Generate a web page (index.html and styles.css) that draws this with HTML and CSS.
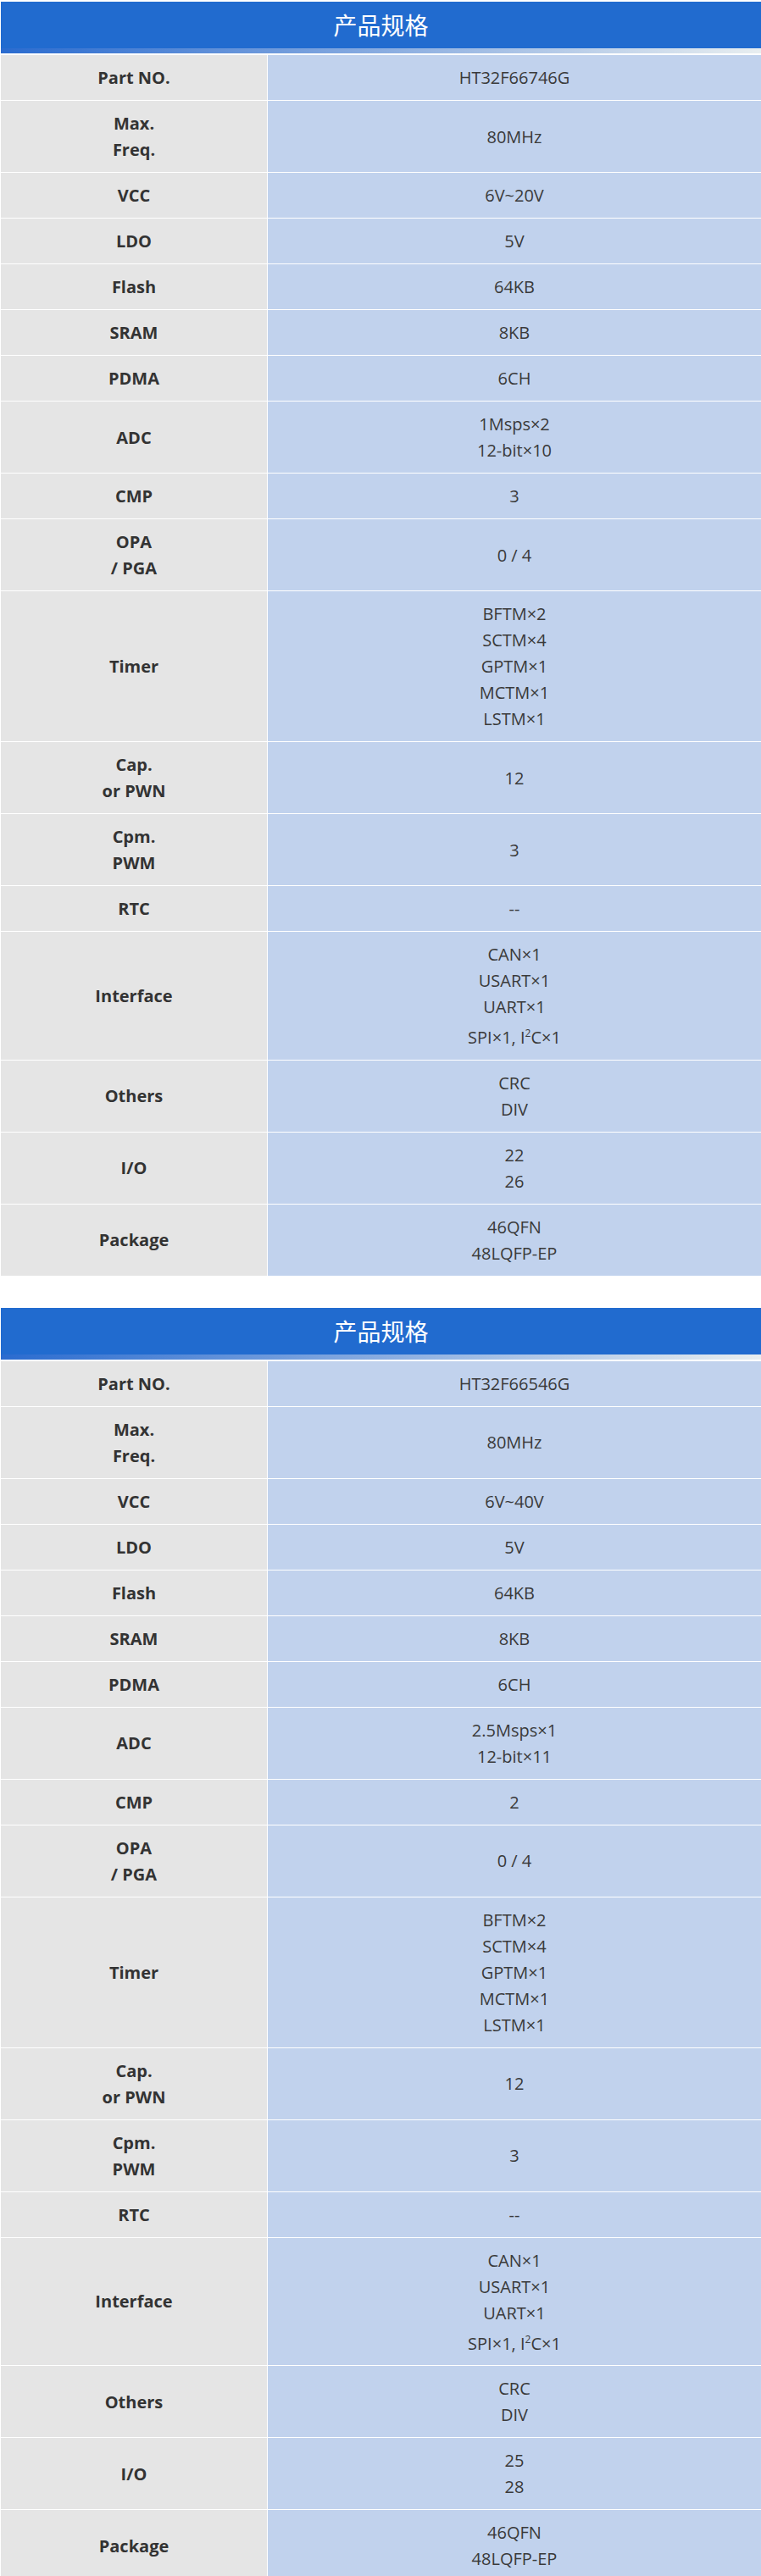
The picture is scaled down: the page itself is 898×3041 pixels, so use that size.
FILE: index.html
```html
<!DOCTYPE html>
<html lang="zh-CN">
<head>
<meta charset="utf-8">
<title>产品规格</title>
<link rel="stylesheet" href="styles.css">
</head>
<body>
<section class="spec">
  <div class="spec-head">产品规格</div>
  <div class="spec-bar"></div>
  <table class="spec-table">
    <tr><td class="label">Part NO.</td><td class="value">HT32F66746G</td></tr>
    <tr><td class="label">Max.<br>Freq.</td><td class="value">80MHz</td></tr>
    <tr><td class="label">VCC</td><td class="value">6V~20V</td></tr>
    <tr><td class="label">LDO</td><td class="value">5V</td></tr>
    <tr><td class="label">Flash</td><td class="value">64KB</td></tr>
    <tr><td class="label">SRAM</td><td class="value">8KB</td></tr>
    <tr><td class="label">PDMA</td><td class="value">6CH</td></tr>
    <tr><td class="label">ADC</td><td class="value">1Msps×2<br>12-bit×10</td></tr>
    <tr><td class="label">CMP</td><td class="value">3</td></tr>
    <tr><td class="label">OPA<br>/ PGA</td><td class="value">0 / 4</td></tr>
    <tr><td class="label">Timer</td><td class="value">BFTM×2<br>SCTM×4<br>GPTM×1<br>MCTM×1<br>LSTM×1</td></tr>
    <tr><td class="label">Cap.<br>or PWN</td><td class="value">12</td></tr>
    <tr><td class="label">Cpm.<br>PWM</td><td class="value">3</td></tr>
    <tr><td class="label">RTC</td><td class="value">--</td></tr>
    <tr><td class="label">Interface</td><td class="value">CAN×1<br>USART×1<br>UART×1<br>SPI×1, I<sup>2</sup>C×1</td></tr>
    <tr><td class="label">Others</td><td class="value">CRC<br>DIV</td></tr>
    <tr><td class="label">I/O</td><td class="value">22<br>26</td></tr>
    <tr><td class="label">Package</td><td class="value">46QFN<br>48LQFP-EP</td></tr>
  </table>
</section>

<section class="spec">
  <div class="spec-head">产品规格</div>
  <div class="spec-bar"></div>
  <table class="spec-table">
    <tr><td class="label">Part NO.</td><td class="value">HT32F66546G</td></tr>
    <tr><td class="label">Max.<br>Freq.</td><td class="value">80MHz</td></tr>
    <tr><td class="label">VCC</td><td class="value">6V~40V</td></tr>
    <tr><td class="label">LDO</td><td class="value">5V</td></tr>
    <tr><td class="label">Flash</td><td class="value">64KB</td></tr>
    <tr><td class="label">SRAM</td><td class="value">8KB</td></tr>
    <tr><td class="label">PDMA</td><td class="value">6CH</td></tr>
    <tr><td class="label">ADC</td><td class="value">2.5Msps×1<br>12-bit×11</td></tr>
    <tr><td class="label">CMP</td><td class="value">2</td></tr>
    <tr><td class="label">OPA<br>/ PGA</td><td class="value">0 / 4</td></tr>
    <tr><td class="label">Timer</td><td class="value">BFTM×2<br>SCTM×4<br>GPTM×1<br>MCTM×1<br>LSTM×1</td></tr>
    <tr><td class="label">Cap.<br>or PWN</td><td class="value">12</td></tr>
    <tr><td class="label">Cpm.<br>PWM</td><td class="value">3</td></tr>
    <tr><td class="label">RTC</td><td class="value">--</td></tr>
    <tr><td class="label">Interface</td><td class="value">CAN×1<br>USART×1<br>UART×1<br>SPI×1, I<sup>2</sup>C×1</td></tr>
    <tr><td class="label">Others</td><td class="value">CRC<br>DIV</td></tr>
    <tr><td class="label">I/O</td><td class="value">25<br>28</td></tr>
    <tr><td class="label">Package</td><td class="value">46QFN<br>48LQFP-EP</td></tr>
  </table>
</section>
</body>
</html>
```

FILE: styles.css
```css
html, body {
  margin: 0;
  padding: 0;
  background: #ffffff;
}

body {
  font-family: "Open Sans", "Noto Sans CJK SC", sans-serif;
  color: #333333;
}

.spec {
  margin: 2px 0 38px 1px;
  width: 897px;
}

.spec-head {
  height: 55px;
  line-height: 55px;
  background: #216bcf;
  color: #ffffff;
  text-align: center;
  font-family: "Noto Sans CJK SC", sans-serif;
  font-size: 28px;
}

.spec-bar {
  height: 6px;
  background: linear-gradient(to right, #2a6bcf 0%, #89ace0 50%, #e8eef0 100%);
  margin-bottom: 2px;
}

.spec-table {
  width: 100%;
  border-collapse: collapse;
  border-spacing: 0;
}

.spec-table td {
  padding: 11px 0;
  line-height: 31px;
  font-size: 20px;
  text-align: center;
  vertical-align: middle;
  border-bottom: 1px solid #ffffff;
}

.spec-table tr:last-child td {
  border-bottom: 0;
}

.label {
  width: 314px;
  background: #e5e5e5;
  font-weight: 700;
  color: #333333;
  border-right: 1px solid #ffffff;
}

.value {
  background: #c1d2ed;
  color: #3a3a3a;
}

.value sup {
  font-size: 12px;
}
```
